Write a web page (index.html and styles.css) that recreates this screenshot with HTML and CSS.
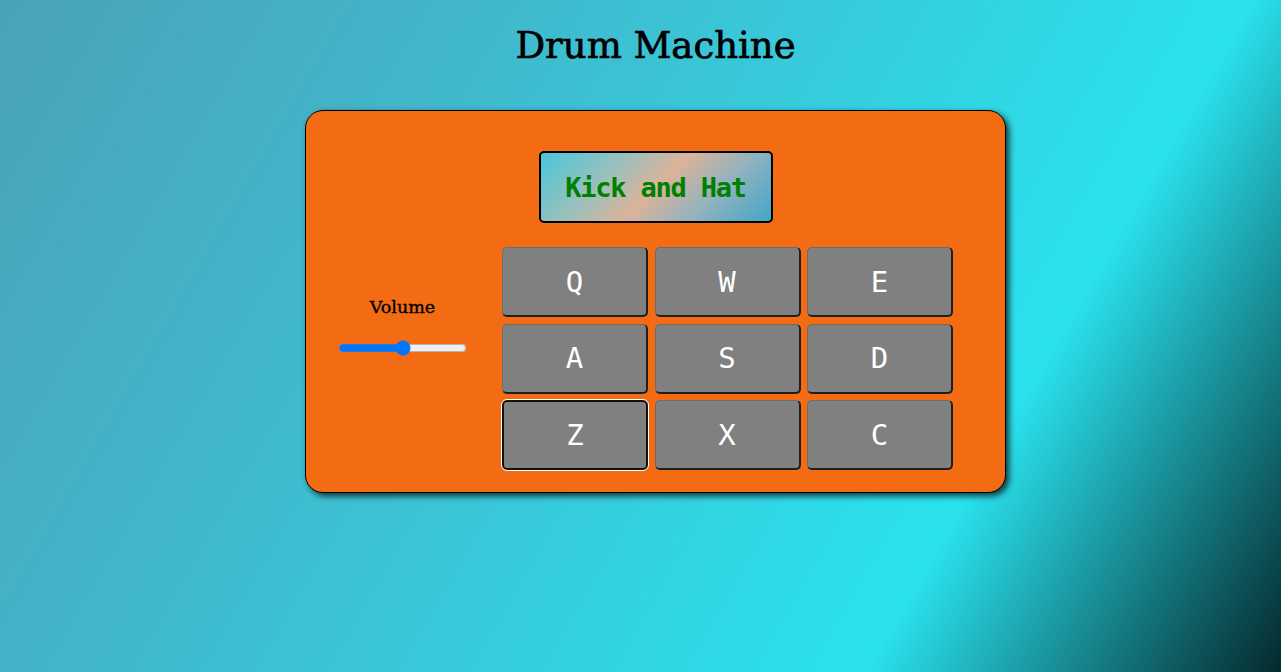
FILE: index.html
```html
<!DOCTYPE html>
<html lang="en">
<head>
<meta charset="utf-8">
<title>Drum Machine</title>
<link rel="stylesheet" href="styles.css">
</head>
<body>
<div class="page">
  <h1 class="title">Drum Machine</h1>
  <div id="drum-machine" class="machine">
    <div id="display" class="display">Kick and Hat</div>
    <div class="controls">
      <div class="volume">
        <label class="volume-label" for="vol">Volume</label>
        <input class="volume-range" id="vol" type="range" min="0" max="100" value="50">
      </div>
      <div class="pad">
        <button class="drum-pad">Q</button>
        <button class="drum-pad">W</button>
        <button class="drum-pad">E</button>
        <button class="drum-pad">A</button>
        <button class="drum-pad">S</button>
        <button class="drum-pad">D</button>
        <button class="drum-pad focused">Z</button>
        <button class="drum-pad">X</button>
        <button class="drum-pad">C</button>
      </div>
    </div>
  </div>
</div>
</body>
</html>
```

FILE: styles.css
```css
html, body {
  margin: 0;
  height: 100%;
}

body {
  min-height: 672px;
  background: linear-gradient(120deg, #4ba2b6 0%, #41b8cc 30%, #2ae2ee 75%, #04292d 100%);
  font-family: "DejaVu Serif", serif;
  color: #000;
}

.page {
  padding-left: 30px;
  display: flex;
  flex-direction: column;
  align-items: center;
}

.title {
  margin: 24px 0 42px;
  font-family: "DejaVu Serif", serif;
  font-weight: normal;
  font-size: 37px;
  line-height: 44px;
  -webkit-text-stroke: 0.7px #000;
}

.machine {
  box-sizing: border-box;
  width: 701px;
  height: 383px;
  background: #f36c14;
  border: 1px solid #000;
  border-radius: 18px;
  box-shadow: 3px 3px 6px rgba(0, 0, 0, 0.75);
  padding: 40px 52px 22px 31px;
  display: flex;
  flex-direction: column;
}

.display {
  box-sizing: border-box;
  align-self: center;
  margin-left: 21px;
  width: 234px;
  height: 73px;
  border: 2px solid #000;
  border-radius: 5px;
  background: linear-gradient(135deg, #4ac6d9 0%, #a2bfb9 32%, #dcb39a 50%, #93b3be 72%, #44a6c7 100%);
  display: flex;
  align-items: center;
  justify-content: center;
  font-family: "DejaVu Sans Mono", monospace;
  font-weight: bold;
  font-size: 27px;
  letter-spacing: -1.2px;
  color: #008000;
  margin-bottom: 24px;
}

.controls {
  display: flex;
  gap: 34px;
}

.volume {
  width: 131px;
  margin-top: 49px;
  display: flex;
  flex-direction: column;
  align-items: center;
}

.volume-label {
  font-family: "DejaVu Serif", serif;
  font-size: 17.5px;
  line-height: 22px;
  -webkit-text-stroke: 0.35px #000;
}

.volume-range {
  width: 129px;
  margin: 22px 0 0;
}

.pad {
  display: grid;
  grid-template-columns: repeat(3, 146px);
  grid-template-rows: repeat(3, 70px);
  gap: 6.5px;
}

.drum-pad {
  box-sizing: border-box;
  margin: 0;
  padding: 0;
  background: #808080;
  border-style: solid;
  border-width: 1px 2px 2px 1px;
  border-color: #6c6c6c #1e1e1e #1e1e1e #6c6c6c;
  border-radius: 5px;
  color: #fff;
  font-family: "DejaVu Sans Mono", monospace;
  font-size: 29px;
  cursor: pointer;
}

.drum-pad.focused {
  border: 2px solid #111;
  outline: 1px solid #fff;
}
```
